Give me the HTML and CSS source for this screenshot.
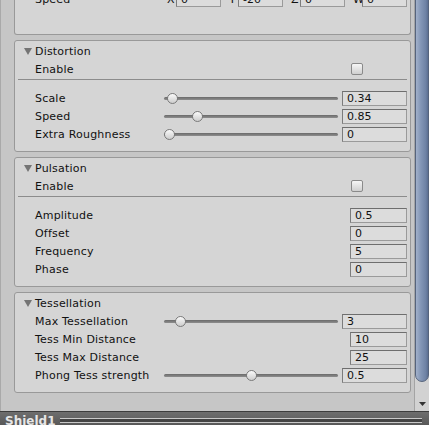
FILE: index.html
```html
<!DOCTYPE html>
<html lang="en">

<head>
    <meta charset="UTF-8">
    <title>Inspector - Shield1</title>
    <link rel="stylesheet" href="styles.css">
</head>

<body>
    <div class="window">
        <div class="inspector">
            <div class="content">
                <!-- section cut off by the scroll position -->
                <div class="box box-cut">
                    <div class="row">
                        <span class="label fixed">Speed</span>
                        <div class="vector">
                            <div class="vpart"><span class="vlabel">X</span><span class="field">0</span></div>
                            <div class="vpart"><span class="vlabel">Y</span><span class="field">-20</span></div>
                            <div class="vpart"><span class="vlabel">Z</span><span class="field">0</span></div>
                            <div class="vpart"><span class="vlabel">W</span><span class="field">0</span></div>
                        </div>
                    </div>
                </div>

                <div class="box">
                    <div class="box-head">
                        <svg class="fold" width="8" height="7" viewBox="0 0 8 7"><polygon points="0,0 8,0 4,7" /></svg>
                        Distortion
                    </div>
                    <div class="row">
                        <span class="label grow">Enable</span>
                        <span class="check-cell"><span class="check"></span></span>
                    </div>
                    <div class="sep"></div>
                    <div class="row">
                        <span class="label fixed">Scale</span>
                        <div class="slider"><span class="knob" style="left: calc((100% - 11px) * 0.021)"></span></div>
                        <span class="field wide">0.34</span>
                    </div>
                    <div class="row">
                        <span class="label fixed">Speed</span>
                        <div class="slider"><span class="knob" style="left: calc((100% - 11px) * 0.17)"></span></div>
                        <span class="field wide">0.85</span>
                    </div>
                    <div class="row">
                        <span class="label fixed">Extra Roughness</span>
                        <div class="slider"><span class="knob" style="left: 0"></span></div>
                        <span class="field wide">0</span>
                    </div>
                </div>

                <div class="box">
                    <div class="box-head">
                        <svg class="fold" width="8" height="7" viewBox="0 0 8 7"><polygon points="0,0 8,0 4,7" /></svg>
                        Pulsation
                    </div>
                    <div class="row">
                        <span class="label grow">Enable</span>
                        <span class="check-cell"><span class="check"></span></span>
                    </div>
                    <div class="sep"></div>
                    <div class="row">
                        <span class="label grow">Amplitude</span>
                        <span class="field">0.5</span>
                    </div>
                    <div class="row">
                        <span class="label grow">Offset</span>
                        <span class="field">0</span>
                    </div>
                    <div class="row">
                        <span class="label grow">Frequency</span>
                        <span class="field">5</span>
                    </div>
                    <div class="row">
                        <span class="label grow">Phase</span>
                        <span class="field">0</span>
                    </div>
                </div>

                <div class="box">
                    <div class="box-head">
                        <svg class="fold" width="8" height="7" viewBox="0 0 8 7"><polygon points="0,0 8,0 4,7" /></svg>
                        Tessellation
                    </div>
                    <div class="row">
                        <span class="label fixed">Max Tessellation</span>
                        <div class="slider"><span class="knob" style="left: calc((100% - 11px) * 0.0645)"></span></div>
                        <span class="field wide">3</span>
                    </div>
                    <div class="row">
                        <span class="label grow">Tess Min Distance</span>
                        <span class="field">10</span>
                    </div>
                    <div class="row">
                        <span class="label grow">Tess Max Distance</span>
                        <span class="field">25</span>
                    </div>
                    <div class="row">
                        <span class="label fixed">Phong Tess strength</span>
                        <div class="slider"><span class="knob" style="left: calc((100% - 11px) * 0.5)"></span></div>
                        <span class="field wide">0.5</span>
                    </div>
                </div>
            </div>

            <div class="scrollbar">
                <div class="scroll-thumb"></div>
                <div class="scroll-track"></div>
                <div class="scroll-down">
                    <svg width="7" height="4" viewBox="0 0 7 4"><polygon points="0,0 7,0 3.5,4" /></svg>
                </div>
            </div>
        </div>

        <div class="statusbar">
            <span class="title">Shield1</span>
            <div class="grip"></div>
        </div>
    </div>
</body>

</html>
```

FILE: styles.css
```css
/* reset */
* {
    box-sizing: border-box;
    margin: 0;
    padding: 0;
}

body {
    font-family: "DejaVu Sans", Verdana, sans-serif;
    font-size: 11px;
    letter-spacing: 0.2px;
    color: #111;
    background-color: #c6c6c6;
    width: 429px;
    height: 425px;
    overflow: hidden;
}

.window {
    display: flex;
    flex-direction: column;
    height: 425px;
}

.inspector {
    display: flex;
    height: 411px;
    overflow: hidden;
}

.content {
    flex: 1;
    border-left: 1px solid #a9a9a9;
}

/* boxed sections */
.box {
    margin: 5px 3px 0 13px;
    padding: 1px 3px 8px 0;
    background-color: #d5d5d5;
    border: 1px solid #999;
    border-radius: 3px;
}

.box-cut {
    margin-top: -12px;
    padding-top: 2px;
    padding-bottom: 26px;
    border-top: none;
    border-radius: 0 0 3px 3px;
}

.box-head {
    display: flex;
    align-items: center;
    height: 18px;
    padding-left: 9px;
}

.fold {
    fill: #747474;
    margin-right: 3px;
}

.row {
    display: flex;
    align-items: center;
    height: 18px;
    padding-left: 20px;
}

.label {
    white-space: nowrap;
}

.label.fixed {
    width: 129px;
    flex-shrink: 0;
}

.label.grow {
    flex: 1;
}

.sep {
    height: 1px;
    margin: 1px 0 9px 3px;
    background-color: #8c8c8c;
}

/* inputs */
.field {
    display: block;
    width: 57px;
    height: 15px;
    line-height: 13px;
    padding-left: 4px;
    letter-spacing: 0;
    background-color: #dcdcdc;
    border: 1px solid #9a9a9a;
    border-top-color: #6e6e6e;
    border-left-color: #7c7c7c;
}

.field.wide {
    width: 65px;
}

.check-cell {
    width: 57px;
    padding-left: 1px;
}

.check {
    display: block;
    width: 12px;
    height: 12px;
    border: 1px solid #8a8a8a;
    border-radius: 2px;
    background: linear-gradient(#f6f6f6, #cfcfcf);
}

.slider {
    position: relative;
    flex: 1;
    height: 11px;
    margin-right: 4px;
}

.slider::before {
    content: "";
    position: absolute;
    left: 0;
    right: 0;
    top: 4px;
    height: 3px;
    border-radius: 2px;
    background: linear-gradient(#6a6a6a, #8e8e8e);
}

.knob {
    position: absolute;
    top: 0;
    width: 11px;
    height: 11px;
    border: 1px solid #7a7a7a;
    border-radius: 50%;
    background: linear-gradient(#fafafa, #cdcdcd);
}

/* vector field */
.vector {
    flex: 1;
    display: flex;
    gap: 5px;
}

.vpart {
    flex: 1;
    display: flex;
    align-items: center;
}

.vpart .vlabel {
    width: 12px;
    padding-left: 3px;
}

.vpart .field {
    flex: 1;
    width: auto;
}

/* scrollbar */
.scrollbar {
    width: 15px;
    display: flex;
    flex-direction: column;
    background-color: #d2d2d2;
    border-left: 1px solid #a4a4a4;
}

.scroll-thumb {
    height: 392px;
    margin-top: -10px;
    flex-shrink: 0;
    border-radius: 0 0 7px 7px;
    border: 1px solid #56647c;
    background: linear-gradient(90deg, #a2b1ca, #8396b6 40%, #6f83a5 80%, #5c6f92);
}

.scroll-track {
    flex: 1;
}

.scroll-down {
    height: 14px;
    display: flex;
    justify-content: center;
    align-items: center;
    fill: #333;
}

/* bottom bar */
.statusbar {
    display: flex;
    align-items: flex-end;
    height: 14px;
    padding: 0 7px 0 5px;
    background: linear-gradient(#6e6e6e, #585858);
    border-top: 1px solid #3c3c3c;
    overflow: hidden;
}

.title {
    font-weight: bold;
    font-size: 12px;
    line-height: 14px;
    letter-spacing: 0;
    color: #e6e6e6;
    margin: 0 4px -3px 0;
}

.grip {
    flex: 1;
    height: 5px;
    margin-bottom: 2px;
    border-top: 1px solid #c9c9c9;
    border-bottom: 1px solid #c9c9c9;
    background-color: #444;
}
```
